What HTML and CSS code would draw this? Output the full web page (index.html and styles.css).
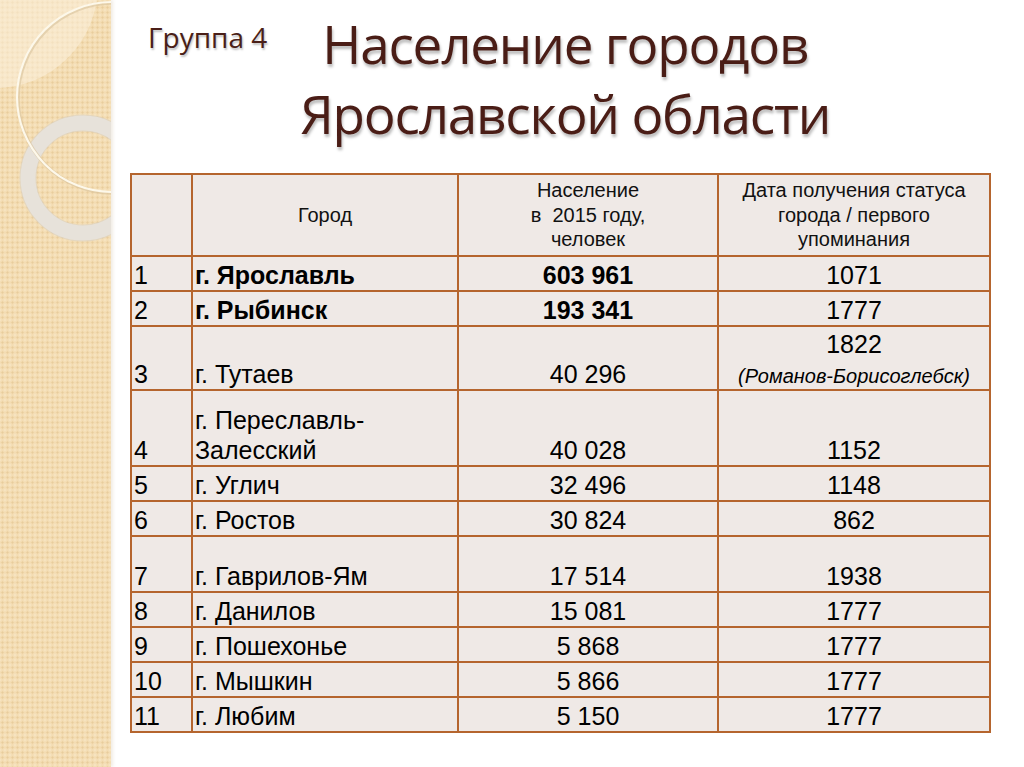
FILE: index.html
```html
<!DOCTYPE html>
<html lang="ru">
<head>
<meta charset="utf-8">
<title>Население городов Ярославской области</title>
<link rel="stylesheet" href="styles.css">
</head>
<body>
<div class="slide">
  <aside class="deco">
    <svg class="deco-art" width="111" height="767" viewBox="0 0 111 767" xmlns="http://www.w3.org/2000/svg">
      <circle cx="-5" cy="-15" r="103" fill="#fbf1dc" opacity="0.55"/>
      <circle cx="83" cy="178" r="55" fill="none" stroke="#d9d0c3" stroke-width="17" opacity="0.6"/>
      <circle cx="83" cy="178" r="55" fill="none" stroke="#e7e2da" stroke-width="15"/>
      <circle cx="113" cy="98" r="95" fill="none" stroke="#d8c39c" stroke-width="3.5" opacity="0.6"/>
      <circle cx="112" cy="97" r="95" fill="none" stroke="#fdf8ea" stroke-width="2.2"/>
    </svg>
  </aside>
  <main class="content">
    <header class="head">
      <div class="group">Группа 4</div>
      <h1 class="title">Население городов<br>Ярославской области</h1>
    </header>
    <table class="cities">
      <colgroup>
        <col class="c-num"><col class="c-city"><col class="c-pop"><col class="c-date">
      </colgroup>
      <thead>
        <tr class="r-head">
          <th></th>
          <th>Город</th>
          <th>Население<br>в&nbsp; 2015 году,<br>человек</th>
          <th>Дата получения статуса<br>города / первого<br>упоминания</th>
        </tr>
      </thead>
      <tbody>
        <tr><td>1</td><td class="b">г. Ярославль</td><td class="mid b">603 961</td><td class="mid">1071</td></tr>
        <tr><td>2</td><td class="b">г. Рыбинск</td><td class="mid b">193 341</td><td class="mid">1777</td></tr>
        <tr class="r-3"><td>3</td><td>г. Тутаев</td><td class="mid">40 296</td><td class="mid">1822<br><span class="note">(Романов-Борисоглебск)</span></td></tr>
        <tr class="r-4"><td>4</td><td>г. Переславль-<br>Залесский</td><td class="mid">40 028</td><td class="mid">1152</td></tr>
        <tr><td>5</td><td>г. Углич</td><td class="mid">32 496</td><td class="mid">1148</td></tr>
        <tr><td>6</td><td>г. Ростов</td><td class="mid">30 824</td><td class="mid">862</td></tr>
        <tr class="r-7"><td>7</td><td>г. Гаврилов-Ям</td><td class="mid">17 514</td><td class="mid">1938</td></tr>
        <tr><td>8</td><td>г. Данилов</td><td class="mid">15 081</td><td class="mid">1777</td></tr>
        <tr><td>9</td><td>г. Пошехонье</td><td class="mid">5 868</td><td class="mid">1777</td></tr>
        <tr><td>10</td><td>г. Мышкин</td><td class="mid">5 866</td><td class="mid">1777</td></tr>
        <tr><td>11</td><td>г. Любим</td><td class="mid">5 150</td><td class="mid">1777</td></tr>
      </tbody>
    </table>
  </main>
</div>
</body>
</html>
```

FILE: styles.css
```css
html, body {
  margin: 0;
  padding: 0;
  background: #ffffff;
}

.slide {
  display: flex;
  width: 1024px;
  height: 767px;
  overflow: hidden;
}

.deco {
  flex: none;
  width: 111px;
  height: 767px;
  background-color: #f3dcb2;
  background-image:
    radial-gradient(circle, rgba(214, 178, 120, 0.35) 0.8px, transparent 1.4px),
    radial-gradient(circle, rgba(255, 248, 230, 0.45) 0.8px, transparent 1.4px);
  background-size: 5px 5px, 5px 5px;
  background-position: 0 0, 2.5px 2.5px;
  box-shadow: 2px 0 3px rgba(200, 180, 150, 0.25);
}

.deco-art {
  display: block;
}

.content {
  flex: 1;
  display: flex;
  flex-direction: column;
  padding-left: 19px;
}

.head {
  display: flex;
  align-items: flex-start;
  padding-top: 9px;
  padding-left: 18px;
}

.group {
  margin-top: 9px;
  font-family: "Open Sans", "Noto Sans", sans-serif;
  font-size: 28px;
  color: #4a1f18;
  text-shadow: 1px 2px 2px rgba(0, 0, 0, 0.25);
}

.title {
  margin: 0 0 0 33px;
  font-family: "Open Sans", "Noto Sans", sans-serif;
  font-weight: 400;
  font-size: 53px;
  line-height: 70px;
  letter-spacing: -1.2px;
  color: #4a1d16;
  text-align: center;
  text-shadow: 1px 3px 3px rgba(0, 0, 0, 0.28);
}

.cities {
  margin-top: 24px;
  width: 859px;
  table-layout: fixed;
  border-collapse: collapse;
  font-family: "Liberation Sans", Arial, sans-serif;
  font-size: 25px;
  line-height: 30px;
  color: #000000;
}

.c-num { width: 61px; }
.c-city { width: 266px; }
.c-pop { width: 260px; }
.c-date { width: 272px; }

.cities th,
.cities td {
  border: 2px solid #b5652e;
  background: #efe9e6;
  padding: 0 2px;
  vertical-align: bottom;
  text-align: left;
  white-space: nowrap;
}

.cities tr { height: 35px; }

.cities .r-head { height: 82px; }
.cities .r-3 { height: 64px; }
.cities .r-4 { height: 76px; }
.cities .r-7 { height: 56px; }

.cities th {
  font-weight: 400;
  font-size: 20px;
  line-height: 24.5px;
  text-align: center;
  vertical-align: middle;
  color: #111111;
}

.cities td.mid { text-align: center; }
.cities td.b { font-weight: 700; }

.note {
  font-style: italic;
  font-size: 20px;
  line-height: 24px;
}
```
